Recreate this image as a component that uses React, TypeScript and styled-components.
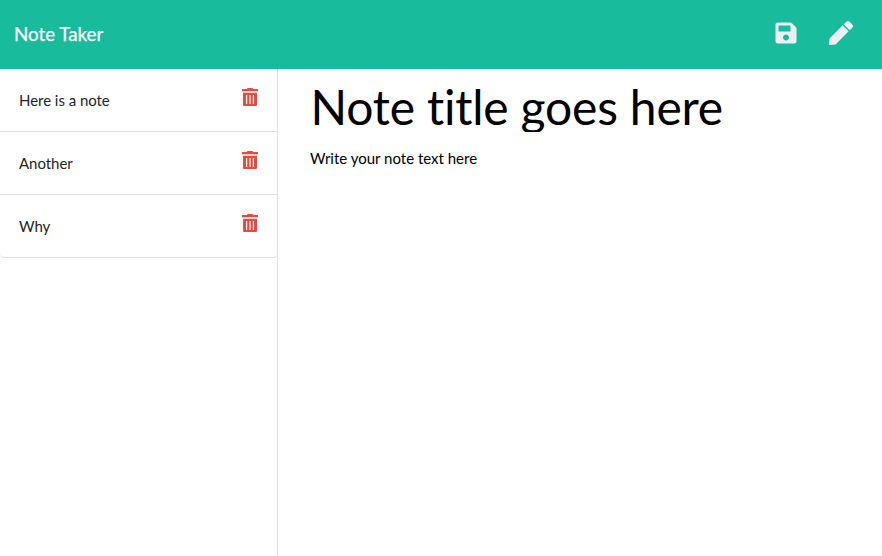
import React from "react";
import styled, { createGlobalStyle } from "styled-components";
import { FaSave, FaPen } from "react-icons/fa";

const Global = createGlobalStyle`
  *, *::before, *::after { box-sizing: border-box; }
  body { margin: 0; background: #fff; color: #212529; font: 400 15px/1.5 Lato, sans-serif; font-variant-ligatures: none; }
`;
const Page = styled.div`
  height: 556px;
  display: flex;
  flex-direction: column;
  overflow: hidden;
`;
const Navbar = styled.header`
  height: 69px;
  flex: none;
  display: flex;
  align-items: center;
  justify-content: space-between;
  padding: 0 28px 2px 14px;
  background: #18bc9c;
`;
const Brand = styled.span`
  color: #fff;
  font-size: 18.75px;
  line-height: 28px;
  -webkit-text-stroke: 0.25px #fff;
`;
const Actions = styled.div`
  display: flex;
  gap: 31px;
  padding-right: 1px;
  color: #ecf0f1;
  margin-top: -1px;
`;
const Main = styled.main`
  flex: 1;
  display: flex;
`;
const NoteList = styled.ul`
  width: 278px;
  margin: 0;
  padding: 0;
  list-style: none;
  border-right: 1px solid #dee2e6;
`;
const NoteItem = styled.li`
  height: 63px;
  display: flex;
  justify-content: space-between;
  padding: 19px;
  border-bottom: 1px solid #dfdfdf;

  &:last-child {
    border-radius: 0 0 4px 4px;
  }
`;
const NoteName = styled.span`
  line-height: 24px;
  letter-spacing: -0.04px;
`;
const TrashSvg = styled.svg`
  flex: none;
  width: 16px;
  height: 18px;
  fill: #e74c3c;
`;
const Editor = styled.section`
  flex: 1;
  padding: 14px 32px;
  color: #000;
`;
const Title = styled.h1`
  margin: 0;
  height: 49px;
  overflow: hidden;
  padding-left: 0.5px;
  font-size: 48px;
  font-weight: 400;
  line-height: 47px;
  letter-spacing: -0.2px;
`;
const Body = styled.p`
  margin: 15px 0 0;
`;

function Trash() {
  return (
    <TrashSvg viewBox="0 0 16 18" aria-label="Delete">
      <path d="M5.5 0h5l.7 1H16v2.3H0V1h4.8z" />
      <path fillRule="evenodd" d="M1 4.7h14V17q0 1-1 1H2q-1 0-1-1zM4 7v9h1.2V7zM7.4 7v9h1.2V7zM10.8 7v9H12V7z" />
    </TrashSvg>
  );
}

export default function App() {
  return (
    <Page>
      <Global />
      <Navbar>
        <Brand>Note Taker</Brand>
        <Actions>
          <FaSave size={24} />
          <FaPen size={24} />
        </Actions>
      </Navbar>
      <Main>
        <NoteList>
          {["Here is a note", "Another", "Why"].map((n) => (
            <NoteItem key={n}>
              <NoteName>{n}</NoteName>
              <Trash />
            </NoteItem>
          ))}
        </NoteList>
        <Editor>
          <Title>Note title goes here</Title>
          <Body>Write your note text here</Body>
        </Editor>
      </Main>
    </Page>
  );
}
